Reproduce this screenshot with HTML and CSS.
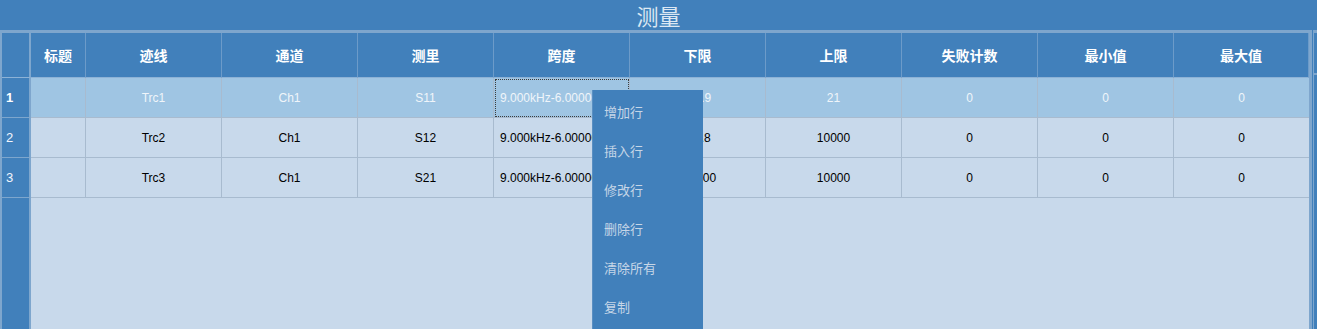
FILE: index.html
```html
<!DOCTYPE html>
<html lang="zh-CN">
<head>
    <meta charset="UTF-8">
    <title>测量</title>
    <link rel="stylesheet" href="styles.css">
</head>
<body>
    <div class="screen">
        <header class="title-bar">测量</header>

        <div class="workspace">
            <div class="grid-panel">
                <div class="grid">
                    <div class="head corner"></div>
                    <div class="head">标题</div>
                    <div class="head">迹线</div>
                    <div class="head">通道</div>
                    <div class="head">测里</div>
                    <div class="head">跨度</div>
                    <div class="head">下限</div>
                    <div class="head">上限</div>
                    <div class="head">失败计数</div>
                    <div class="head">最小值</div>
                    <div class="head">最大值</div>

                    <div class="row-head selected">1</div>
                    <div class="cell selected"></div>
                    <div class="cell selected">Trc1</div>
                    <div class="cell selected">Ch1</div>
                    <div class="cell selected">S11</div>
                    <div class="cell selected span focused">9.000kHz-6.000000GHz</div>
                    <div class="cell selected">-20.9</div>
                    <div class="cell selected">21</div>
                    <div class="cell selected">0</div>
                    <div class="cell selected">0</div>
                    <div class="cell selected">0</div>

                    <div class="row-head">2</div>
                    <div class="cell"></div>
                    <div class="cell">Trc2</div>
                    <div class="cell">Ch1</div>
                    <div class="cell">S12</div>
                    <div class="cell span">9.000kHz-6.000000GHz</div>
                    <div class="cell">-11.8</div>
                    <div class="cell">10000</div>
                    <div class="cell">0</div>
                    <div class="cell">0</div>
                    <div class="cell">0</div>

                    <div class="row-head">3</div>
                    <div class="cell"></div>
                    <div class="cell">Trc3</div>
                    <div class="cell">Ch1</div>
                    <div class="cell">S21</div>
                    <div class="cell span">9.000kHz-6.000000GHz</div>
                    <div class="cell">-10000</div>
                    <div class="cell">10000</div>
                    <div class="cell">0</div>
                    <div class="cell">0</div>
                    <div class="cell">0</div>

                    <div class="row-head filler"></div>
                    <div class="empty"></div>
                </div>
            </div>
            <div class="side-panel"></div>
        </div>

        <ul class="context-menu">
            <li>增加行</li>
            <li>插入行</li>
            <li>修改行</li>
            <li>删除行</li>
            <li>清除所有</li>
            <li>复制</li>
        </ul>
    </div>
</body>
</html>
```

FILE: styles.css
```css
:root {
    --blue: #4180bb;
    --blue-line: #7ea6cd;
    --row-bg: #c8d9eb;
    --row-selected: #9fc5e3;
    --cell-line: #a8bbcf;
    --menu-text: #c6d6e7;
}

html, body {
    margin: 0;
    height: 100%;
    overflow: hidden;
}

body {
    background-color: var(--blue);
    font-family: "Liberation Sans", Arial, "Noto Sans CJK SC", sans-serif;
}

.screen {
    position: relative;
    height: 100vh;
    display: flex;
    flex-direction: column;
    overflow: hidden;
}

/* Title */
.title-bar {
    height: 30px;
    line-height: 30px;
    text-align: center;
    font-family: "Noto Sans CJK SC", sans-serif;
    font-size: 22px;
    color: #dce8f3;
    flex-shrink: 0;
}

.workspace {
    flex-grow: 1;
    display: flex;
    min-height: 0;
}

.grid-panel {
    width: 1312px;
    flex-shrink: 0;
    box-sizing: border-box;
    border-top: 3px solid var(--blue-line);
    border-left: 2px solid var(--blue-line);
    border-right: 3px solid var(--blue-line);
    display: flex;
}

.side-panel {
    flex-grow: 1;
    margin-left: 1px;
    border-top: 3px solid var(--blue-line);
    border-left: 1px solid var(--blue-line);
}
.side-panel::before {
    content: "";
    display: block;
    height: 40px;
    border-bottom: 2px solid var(--blue-line);
}

/* Grid */
.grid {
    flex-grow: 1;
    display: grid;
    grid-template-columns: 29px 55px repeat(8, 136px) 135px;
    grid-template-rows: 45px 40px 40px 40px 1fr;
}

.head {
    box-sizing: border-box;
    display: flex;
    align-items: center;
    justify-content: center;
    background-color: var(--blue);
    color: #ffffff;
    font-family: "Noto Sans CJK SC", sans-serif;
    font-weight: bold;
    font-size: 14px;
    border-right: 1px solid #6c9bc9;
    border-bottom: 1px solid #8db2d6;
}
.head.corner { border-right: 2px solid var(--blue-line); }
.head:last-child { border-right: none; }

.row-head {
    box-sizing: border-box;
    display: flex;
    align-items: center;
    padding-left: 4px;
    background-color: var(--blue);
    color: #f2f6fb;
    font-size: 13px;
    border-right: 2px solid var(--blue-line);
    border-bottom: 1px solid var(--blue-line);
}
.row-head.selected { font-weight: bold; color: #ffffff; }
.row-head.filler { border-bottom: none; }

.cell {
    box-sizing: border-box;
    display: flex;
    align-items: center;
    justify-content: center;
    background-color: var(--row-bg);
    color: #000000;
    font-size: 12px;
    white-space: nowrap;
    overflow: hidden;
    border-right: 1px solid var(--cell-line);
    border-bottom: 1px solid var(--cell-line);
}
.cell:nth-child(11n) { border-right: none; }
.cell.selected {
    background-color: var(--row-selected);
    color: #f0f5fa;
}
.cell.span {
    justify-content: flex-start;
    padding-left: 6px;
}
.cell.focused {
    outline: 1px dotted #3c3c3c;
    outline-offset: -2px;
}

.empty {
    grid-column: span 10;
    background-color: var(--row-bg);
}

/* Context menu */
.context-menu {
    position: absolute;
    left: 592px;
    top: 90px;
    bottom: 0;
    width: 111px;
    margin: 0;
    padding: 2px 0 0 0;
    list-style: none;
    box-sizing: border-box;
    overflow: hidden;
    background-color: var(--blue);
    border-left: 1px solid #5a8fc2;
}
.context-menu li {
    height: 39px;
    line-height: 39px;
    padding-left: 11px;
    font-family: "Noto Sans CJK SC", sans-serif;
    font-size: 13px;
    color: var(--menu-text);
}
```
